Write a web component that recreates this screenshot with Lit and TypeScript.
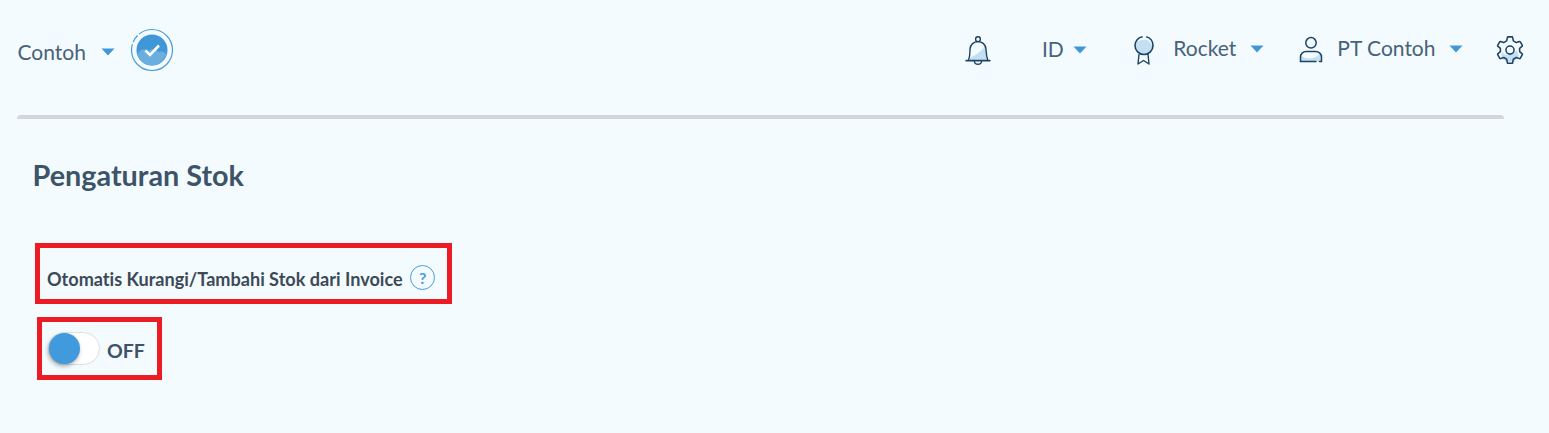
import { LitElement, html, css } from "lit";
import { customElement } from "lit/decorators.js";

const caret = html`<svg class="caret" width="14" height="8" viewBox="0 0 14 8"><path d="M0.5 0.5H13.5L7 7.5Z" fill="#3f97d8"/></svg>`;
const ink = "#1d4464";
const fill = "#c3dff3";

const bell = html`<svg width="26" height="32" viewBox="0 0 26 32" fill="none">
  <path d="M5 23C9 21 17 16 20 11C21.5 14 21.3 19 23 25H5Z" fill="${fill}"/>
  <circle cx="13" cy="4.2" r="2.4" stroke="${ink}" stroke-width="1.4"/>
  <path d="M3.6 25C5.2 21 4.8 17 5 14C5.3 9.5 8.8 6.6 13 6.6C17.2 6.6 20.7 9.5 21 14C21.2 18 21.2 21 22.8 25" stroke="${ink}" stroke-width="1.4"/>
  <path d="M1.2 25.6H24.8" stroke="${ink}" stroke-width="1.8" stroke-linecap="round"/>
  <path d="M9.3 26C9.8 30.4 16.2 30.4 16.7 26" stroke="${ink}" stroke-width="1.4"/>
</svg>`;

const medal = html`<svg width="24" height="32" viewBox="0 0 24 32" fill="none">
  <circle cx="12" cy="11.5" r="9" fill="${fill}"/>
  <path d="M4.5 8.5C8 5 14 5 17 7C18 9 19 10 21 12C20.5 5 16 2.5 12 2.5C8 2.5 5 5 4.5 8.5Z" fill="#f3faff"/>
  <path d="M14.2 2.8C18 3.6 21 7 21 11.5C21 16.5 17 20.5 12 20.5C7 20.5 3 16.5 3 11.5C3 7 6.2 3.4 10.6 2.8" stroke="${ink}" stroke-width="1.6"/>
  <path d="M7 20L6 30L11.5 26.5L17 30L16 20" stroke="${ink}" stroke-width="1.4" stroke-linejoin="round"/>
</svg>`;

const person = html`<svg width="24" height="28" viewBox="0 0 24 28" fill="none">
  <path d="M2 20C7 23 14 24 21 18C22.5 20 22.5 23 22.5 25H2Z" fill="${fill}"/>
  <circle cx="12" cy="6.8" r="5.2" stroke="${ink}" stroke-width="1.5"/>
  <path d="M17 25.5H1.5V21C1.5 18 4 15.5 7 15.5H16.5C20 15.5 22.5 18 22.5 21V25.5H20.5" stroke="${ink}" stroke-width="1.5" stroke-linecap="round"/>
</svg>`;

const gear = html`<svg width="28" height="28" viewBox="1.5 1 25 25" fill="none">
  <path d="M7 15C10 20 15 18 20 14L22 19L18 24H11L6 21Z" fill="${fill}"/>
  <path d="M11.7 2.2C11.7 1.9 12 1.8 12.2 1.8H15.8C16 1.8 16.3 1.9 16.3 2.2L17 5.4L19.6 6.9L22.5 5.9C22.8 5.8 23 5.9 23.1 6.1L25 9.4C25.1 9.7 25.1 9.9 24.9 10.1L22.6 12.1V15L24.9 17C25.1 17.2 25.1 17.5 25 17.7L23.1 21C23 21.2 22.8 21.3 22.5 21.2L19.6 20.2L17 21.7L16.3 25C16.3 25.3 16 25.4 15.8 25.4H12.2C12 25.4 11.7 25.3 11.7 25L11 21.7L8.4 20.2L5.5 21.2C5.2 21.3 5 21.2 4.9 21L3 17.7C2.9 17.5 2.9 17.2 3.1 17L5.4 15V12.1L3.1 10.1C2.9 9.9 2.9 9.7 3 9.4L4.9 6.1C5 5.9 5.2 5.8 5.5 5.9L8.4 6.9L11 5.4Z" stroke="${ink}" stroke-width="1.4" stroke-linejoin="round"/>
  <circle cx="14" cy="13.6" r="3.6" stroke="${ink}" stroke-width="1.4"/>
</svg>`;

const badge = html`<svg width="44" height="44" viewBox="0 0 44 44" fill="none">
  <circle cx="22" cy="22" r="20.5" stroke="#4a9ddb" stroke-width="1.2" stroke-dasharray="70 2 8 2 46 1"/>
  <circle cx="22" cy="22" r="15.5" fill="#3f97d8"/>
  <path d="M7.5 27C9 21 15 20 18 23C22 20 27 21 29 24C32 23 35 24 36 26C34 33 28 37.5 22 37.5C15 37.5 9.5 33 7.5 27Z" fill="#6aaede"/>
  <path d="M15.5 22.5L20 27L29 17.5" stroke="#fff" stroke-width="2.6"/>
</svg>`;

@customElement("app-root")
export class AppRoot extends LitElement {
  static styles = css`
    :host {
      display: block;
      width: 1549px;
      height: 433px;
      overflow: hidden;
      background: #f4fbfe;
      font-family: Lato, "Open Sans", sans-serif;
      font-variant-ligatures: none;
      color: #3d5468;
    }
    .header {
      height: 115px;
      display: flex;
      justify-content: space-between;
      padding: 0 25px 0 17.5px;
      box-sizing: border-box;
    }
    .left {
      display: flex;
      align-items: center;
      height: 102px;
      font-size: 21px;
      color: #47627a;
    }
    .left .caret { margin: 2px 15px 0 15.5px; }
    .left .badge { display: block; margin-top: 1px; }
    .right {
      display: flex;
      align-items: center;
      height: 94px;
      font-size: 21px;
      color: #47627a;
    }
    .item { display: flex; align-items: center; }
    .item svg { display: block; }
    .bell { margin-right: 51px; margin-top: 7px; }
    .lang { margin-right: 45px; margin-top: 3px; }
    .lang .caret { margin-left: 9px; margin-top: 2px; }
    .icon-drop { margin-top: 6px; }
    .medal { margin-right: 35px; }
    .medal .label { margin-left: 17.5px; }
    .medal .caret { margin-left: 14px; margin-top: 4px; }
    .user { margin-right: 33px; }
    .user .label { margin-left: 14px; }
    .user .caret { margin-left: 13.5px; margin-top: 4px; }
    .gear { margin-top: 6px; }
    .rule {
      margin-left: 17px;
      width: 1487px;
      height: 4px;
      background: #d2d6dc;
      border-radius: 4px 4px 0 0;
    }
    .content { padding: 37px 0 0 32.5px; }
    h1 {
      margin: 0;
      font-size: 28.8px;
      line-height: 39px;
      font-weight: 700;
      color: #3d5468;
    }
    .box {
      box-sizing: border-box;
      border: 5px solid #ed1c24;
      display: flex;
      align-items: center;
    }
    .label-box {
      width: 417px;
      height: 61px;
      margin: 48px 0 0 2.5px;
      padding: 10px 0 0 7px;
      font-size: 18.1px;
      font-weight: 700;
      color: #3c4a58;
    }
    .help {
      width: 25px;
      height: 25px;
      box-sizing: border-box;
      border: 1.5px solid #4a9ddb;
      border-radius: 50%;
      margin: -2px 0 0 7.5px;
      color: #4a9ddb;
      font-size: 16px;
      font-weight: 700;
      display: flex;
      align-items: center;
      justify-content: center;
    }
    .toggle-box {
      width: 125px;
      height: 63px;
      margin: 13px 0 0 4.5px;
      padding: 0 0 0 5.5px;
      font-size: 19.5px;
      font-weight: 700;
      color: #3d5468;
    }
    .track {
      width: 52px;
      height: 33px;
      box-sizing: border-box;
      border: 1px solid #dcdfe3;
      border-radius: 17px;
      background: #fff;
      display: flex;
      align-items: center;
    }
    .knob {
      width: 31px;
      height: 31px;
      border-radius: 50%;
      background: #419adb;
      box-shadow: -1px 2px 4px rgba(0, 0, 0, 0.35);
    }
    .state { margin: 4px 0 0 7.5px; }
  `;

  render() {
    return html`
      <div class="header">
        <div class="left">
          <span>Contoh</span>
          ${caret}
          <div class="badge">${badge}</div>
        </div>
        <div class="right">
          <div class="item bell">${bell}</div>
          <div class="item lang"><span>ID</span>${caret}</div>
          <div class="item medal"><div class="icon-drop">${medal}</div><span class="label">Rocket</span>${caret}</div>
          <div class="item user"><div class="icon-drop">${person}</div><span class="label">PT Contoh</span>${caret}</div>
          <div class="item gear">${gear}</div>
        </div>
      </div>
      <div class="rule"></div>
      <div class="content">
        <h1>Pengaturan Stok</h1>
        <div class="box label-box">
          <span>Otomatis Kurangi/Tambahi Stok dari Invoice</span>
          <span class="help">?</span>
        </div>
        <div class="box toggle-box">
          <div class="track"><div class="knob"></div></div>
          <span class="state">OFF</span>
        </div>
      </div>
    `;
  }
}
